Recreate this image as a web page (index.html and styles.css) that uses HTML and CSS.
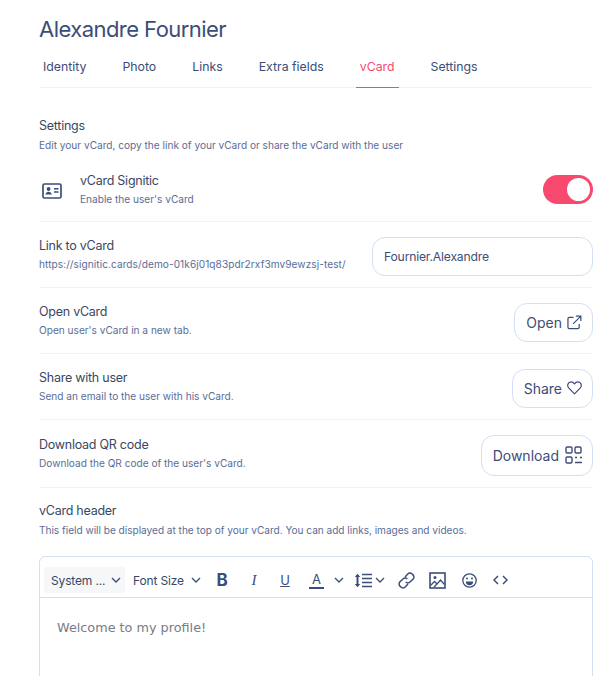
FILE: index.html
```html
<!DOCTYPE html>
<html lang="en">
  <head>
    <meta charset="UTF-8" />
    <meta name="viewport" content="width=device-width, initial-scale=1" />
    <title>Alexandre Fournier</title>
    <link rel="stylesheet" href="styles.css">
  </head>
  <body>
    <h1 class="name">Alexandre Fournier</h1>
    <div class="tabs">
      <a class="tab">Identity</a>
      <a class="tab">Photo</a>
      <a class="tab">Links</a>
      <a class="tab">Extra fields</a>
      <a class="tab active">vCard</a>
      <a class="tab">Settings</a>
    </div>

    <div class="intro">
      <h2>Settings</h2>
      <p>Edit your vCard, copy the link of your vCard or share the vCard with the user</p>
    </div>

    <!-- vCard on/off -->
    <div class="row row-toggle">
      <svg class="card-icon" width="20" height="16" viewBox="0 0 20 16" fill="none">
        <rect x="1" y="1" width="18" height="14" rx="1.5" stroke="#3c4d78" stroke-width="1.7" />
        <circle cx="6.6" cy="6" r="1.9" fill="#3c4d78" />
        <path d="M3.4 11.6c.4-2 1.700-2.900 3.200-2.900s2.800.9 3.200 2.900z" fill="#3c4d78" />
        <path d="M12 5.700h4.500M12 9h4.500" stroke="#3c4d78" stroke-width="1.500" />
      </svg>
      <div class="label">
        <h2>vCard Signitic</h2>
        <p>Enable the user's vCard</p>
      </div>
      <div class="switch"><span class="knob"></span></div>
    </div>

    <div class="row row-link">
      <div class="label">
        <h2>Link to vCard</h2>
        <p>https://signitic.cards/demo-01k6j01q83pdr2rxf3mv9ewzsj-test/</p>
      </div>
      <div class="field">Fournier.Alexandre</div>
    </div>

    <div class="row">
      <div class="label">
        <h2>Open vCard</h2>
        <p>Open user's vCard in a new tab.</p>
      </div>
      <button class="btn">Open
        <svg width="15" height="15" viewBox="0 0 16 16" fill="none" stroke="#3c4d78" stroke-width="1.300">
          <path d="M7 2.500H2.500a1.500 1.500 0 0 0-1.500 1.500v9a1.500 1.500 0 0 0 1.500 1.500h9a1.500 1.500 0 0 0 1.500-1.500V9.500" />
          <path d="M6.500 9.500L14.500 1.500M9.500 1.200h5.300v5.300" />
        </svg>
      </button>
    </div>

    <div class="row">
      <div class="label">
        <h2>Share with user</h2>
        <p>Send an email to the user with his vCard.</p>
      </div>
      <button class="btn">Share
        <svg width="15" height="14" viewBox="0 0 16 15" fill="none" stroke="#3c4d78" stroke-width="1.300">
          <path d="M8 13.800L2 7.700C-.6 4.800 1.200 1 4.300 1 6 1 7.200 1.900 8 3.200 8.800 1.900 10 1 11.700 1c3.100 0 4.900 3.800 2.300 6.700z" stroke-linejoin="round" />
        </svg>
      </button>
    </div>

    <div class="row row-qr">
      <div class="label">
        <h2>Download QR code</h2>
        <p>Download the QR code of the user's vCard.</p>
      </div>
      <button class="btn">Download
        <svg width="17" height="18" viewBox="0 0 17 18" fill="none" stroke="#3c4d78" stroke-width="1.400">
          <rect x="1" y="1" width="6" height="6" rx="1.200" />
          <rect x="10" y="1" width="6" height="6" rx="1.200" />
          <rect x="1" y="11" width="6" height="6" rx="1.200" />
          <path d="M10 11.500h2M15 11.500h2M10 16.500h7" />
        </svg>
      </button>
    </div>

    <div class="intro intro-header">
      <h2>vCard header</h2>
      <p>This field will be displayed at the top of your vCard. You can add links, images and videos.</p>
    </div>

    <!-- Editor -->
    <div class="editor">
      <div class="toolbar">
        <div class="select select-font">System ...
          <svg class="chev" width="10" height="6" viewBox="0 0 10 6"><path d="M1 1l4 4 4-4" /></svg>
        </div>
        <div class="select select-size">Font Size
          <svg class="chev" width="10" height="6" viewBox="0 0 10 6"><path d="M1 1l4 4 4-4" /></svg>
        </div>
        <span class="tool tool-b">B</span>
        <span class="tool tool-i">I</span>
        <span class="tool tool-u">U</span>
        <span class="tool tool-a">A</span>
        <svg class="chev chev-a" width="10" height="6" viewBox="0 0 10 6"><path d="M1 1l4 4 4-4" /></svg>
        <svg class="icon-lh" width="18" height="15" viewBox="0 0 18 15" fill="none" stroke="#3c4d78">
          <path d="M3.500 2v11" stroke-width="2" />
          <path d="M.8 4L3.500.8 6.200 4zM.8 11l2.700 3.200L6.200 11z" fill="#3c4d78" stroke="none" />
          <path d="M8 1.500h10M8 5.500h10M8 9.500h10M8 13.500h10" stroke-width="1.500" />
        </svg>
        <svg class="chev chev-lh" width="10" height="6" viewBox="0 0 10 6"><path d="M1 1l4 4 4-4" /></svg>
        <svg class="icon-link" width="17" height="17" viewBox="0 0 17 17" fill="none" stroke="#3c4d78" stroke-width="1.500">
          <path d="M7 5l2.800-3a3 3 0 0 1 4.300 0l.9.900a3 3 0 0 1 0 4.300L12 10a3 3 0 0 1-4.300 0" />
          <path d="M10 12l-2.800 3a3 3 0 0 1-4.300 0L2 14.100a3 3 0 0 1 0-4.300L5 7a3 3 0 0 1 4.300 0" />
        </svg>
        <svg class="icon-img" width="17" height="17" viewBox="0 0 17 17" fill="none" stroke="#3c4d78">
          <rect x="1" y="1" width="15" height="15" stroke-width="1.600" />
          <circle cx="6" cy="5.500" r="1.500" fill="#3c4d78" stroke="none" />
          <path d="M1.500 13.500l4-4 2.500 2.500 3.500-4 4 4.500M5 15l4-4" stroke-width="1.300" />
        </svg>
        <svg class="icon-smile" width="15" height="15" viewBox="0 0 15 15" fill="none" stroke="#3c4d78" stroke-width="1.300">
          <circle cx="7.500" cy="7.500" r="6.700" />
          <circle cx="5" cy="5.500" r="1" fill="#3c4d78" stroke="none" />
          <circle cx="10" cy="5.500" r="1" fill="#3c4d78" stroke="none" />
          <path d="M3.800 8.500h7.400a3.700 3.700 0 0 1-7.400 0z" fill="#3c4d78" stroke="none" />
        </svg>
        <svg class="icon-code" width="15" height="10" viewBox="0 0 15 10" fill="none" stroke="#3c4d78" stroke-width="1.500">
          <path d="M5 1L1 5l4 4M10 1l4 4-4 4" />
        </svg>
      </div>
      <div class="editor-body">Welcome to my profile!</div>
    </div>
  </body>
</html>
```

FILE: styles.css
```css
* {
  margin: 0;
  padding: 0;
  box-sizing: border-box;
}
html,
body {
  height: 676px;
  overflow: hidden;
}
body {
  background: #fff;
  color: #3c4d78;
  font-family: Inter, "Liberation Sans", sans-serif;
  padding: 0 14px 0 39px;
}
.name {
  font-size: 22px;
  font-weight: 400;
  letter-spacing: -0.55px;
  line-height: 28px;
  padding-top: 15px;
  height: 42px;
}
/* Tabs */
.tabs {
  display: flex;
  height: 46px;
  border-bottom: 1px solid #eef2f9;
}
.tab {
  display: flex;
  align-items: center;
  font-size: 12.300px;
  padding: 3px 4px 0;
  margin-right: 28px;
  height: 46px;
}
.tab.active {
  color: #f74a6e;
  border-bottom: 1px solid #f74a6e;
}
/* Rows */
h2 {
  font-size: 12.500px;
  font-weight: 400;
  letter-spacing: -0.25px;
  line-height: 16px;
  color: #3a4763;
}
.label p,
.intro p {
  font-size: 10.100px;
  line-height: 14px;
  color: #5a6d96;
}
.label p {
  margin-top: 3px;
}
.row-link .label p {
  letter-spacing: 0.07px;
}
.intro p {
  margin-top: 4px;
}
.intro-header p {
  letter-spacing: -0.02px;
}
.intro {
  padding-top: 30px;
}
.row {
  display: flex;
  align-items: center;
  justify-content: space-between;
  height: 66px;
  border-bottom: 1px solid #eef2f9;
}
.row-toggle {
  height: 70px;
  padding-top: 5px;
  justify-content: flex-start;
}
.row-qr {
  height: 68px;
}
.card-icon {
  margin: 3px 18px 0 3px;
}
.switch {
  margin-left: auto;
  width: 50px;
  height: 29px;
  border-radius: 15px;
  background: #f74a6e;
  padding: 3px 3px 3px 24px;
}
.knob {
  display: block;
  width: 23px;
  height: 23px;
  border-radius: 50%;
  background: #fff;
}
.field {
  width: 221px;
  height: 39px;
  margin-top: 3px;
  border: 1px solid #d3dff5;
  border-radius: 13px;
  padding: 0 11px;
  display: flex;
  align-items: center;
  font-size: 12.200px;
  letter-spacing: -0.2px;
}
.btn {
  display: flex;
  align-items: center;
  gap: 5px;
  height: 39px;
  margin-top: 3px;
  padding: 0 10px 0 11px;
  background: #fff;
  border: 1px solid #d3dff5;
  border-radius: 13px;
  color: #3c4d78;
  font-family: inherit;
  font-size: 14px;
}
.row-qr .btn {
  height: 41px;
  gap: 6px;
}
.intro-header {
  padding-top: 15px;
}
/* Editor */
.editor {
  margin-top: 19px;
  height: 140px;
  border: 1px solid #d3dff5;
  border-radius: 6px 6px 0 0;
}
.toolbar {
  display: flex;
  align-items: center;
  height: 41px;
  padding: 6px 0 0 4px;
  border-bottom: 1px solid #d3dff5;
  font-size: 12px;
  letter-spacing: -0.15px;
}
.select {
  display: flex;
  align-items: center;
  height: 26px;
  color: #3a4763;
}
.select-font {
  width: 81px;
  padding: 0 4px 0 7px;
  justify-content: space-between;
  background: #f6f7f8;
  border-radius: 3px;
}
.select-size {
  margin-left: 8px;
  width: 68px;
  justify-content: space-between;
}
.chev {
  fill: none;
  stroke: #3c4d78;
  stroke-width: 1.300;
}
.tool {
  width: 14px;
  text-align: center;
  font-size: 15px;
}
.tool-b {
  margin-left: 14px;
  font-weight: 700;
  font-size: 17px;
}
.tool-i {
  margin-left: 18px;
  font-family: "Liberation Serif", serif;
  font-style: italic;
}
.tool-u {
  margin-left: 17px;
  text-decoration: underline;
  font-size: 13px;
}
.tool-a {
  margin-left: 17px;
  width: 15px;
  font-size: 13px;
  border-bottom: 2px solid #3c4d78;
}
.chev-a {
  margin-left: 10px;
}
.icon-lh {
  margin-left: 10px;
}
.chev-lh {
  margin-left: 3px;
}
.icon-link {
  margin-left: 13px;
}
.icon-img {
  margin-left: 14px;
}
.icon-smile {
  margin-left: 16px;
}
.icon-code {
  margin-left: 16px;
}
.editor-body {
  padding: 22px 17px;
  font-family: "DejaVu Sans", sans-serif;
  font-size: 12.800px;
  color: #767c88;
}
```
